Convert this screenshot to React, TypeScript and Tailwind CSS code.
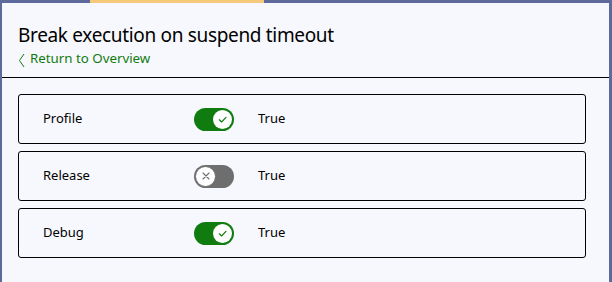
import React from 'react';

type Setting = { name: string; on: boolean; value: string };

const SETTINGS: Setting[] = [
  { name: 'Profile', on: true, value: 'True' },
  { name: 'Release', on: false, value: 'True' },
  { name: 'Debug', on: true, value: 'True' },
];

const Toggle: React.FC<{ on: boolean }> = ({ on }) =>
  on ? (
    <div className="flex h-[23px] w-[40px] items-center justify-end rounded-full bg-[#107c10] pr-[2px]">
      <div className="flex h-[19px] w-[19px] items-center justify-center rounded-full bg-white">
        <svg width="11" height="11" viewBox="0 0 12 12" fill="none">
          <path d="M2.5 6.3 L5 8.7 L9.8 3.6" stroke="#107c10" strokeWidth="1.3" strokeLinecap="round" strokeLinejoin="round" />
        </svg>
      </div>
    </div>
  ) : (
    <div className="flex h-[23px] w-[40px] items-center rounded-full bg-[#6e6e6e] pl-[1px]">
      <div className="flex h-[21px] w-[21px] items-center justify-center rounded-full border border-[#6e6e6e] bg-white">
        <svg width="10" height="10" viewBox="0 0 10 10" fill="none">
          <path d="M2 2 L8 8 M8 2 L2 8" stroke="#6e6e6e" strokeWidth="1.1" strokeLinecap="round" />
        </svg>
      </div>
    </div>
  );

const App: React.FC = () => {
  return (
    <div
      className="flex h-[282px] w-[612px] flex-col border-l-2 border-r-[3px] border-[#5d6a9b] bg-[#f7f8fd] text-black"
      style={{ fontFamily: '"Noto Sans", "Open Sans", sans-serif' }}
    >
      {/* top accent bar */}
      <div className="flex h-[3px] shrink-0">
        <div className="w-[88px] bg-[#5d6a9b]" />
        <div className="w-[174px] bg-[#f6c97a]" />
        <div className="flex-1 bg-[#5d6a9b]" />
      </div>

      <div className="h-[75px] shrink-0 border-b border-black pl-[16px] pt-[20px]">
        <h1 className="text-[19px] leading-[24px] tracking-[-0.33px]">Break execution on suspend timeout</h1>
        <a className="mt-[3px] flex items-center gap-[4px] text-[13.3px] leading-[17px] text-[#107c10]">
          <svg width="8" height="15" viewBox="0 0 8 15" fill="none" className="translate-y-[2px]">
            <path d="M6 1 L1.5 7.5 L6 14" stroke="#107c10" strokeWidth="1" />
          </svg>
          Return to Overview
        </a>
      </div>

      <div className="flex flex-col gap-[7px] pl-[16px] pr-[23px] pt-[16px]">
        {SETTINGS.map(s => (
          <div key={s.name} className="flex h-[50px] items-center rounded-[3px] border border-black pl-[24px] text-[13px]">
            <span className="w-[151px]">{s.name}</span>
            <Toggle on={s.on} />
            <span className="ml-[24px]">{s.value}</span>
          </div>
        ))}
      </div>
    </div>
  );
};

export default App;
